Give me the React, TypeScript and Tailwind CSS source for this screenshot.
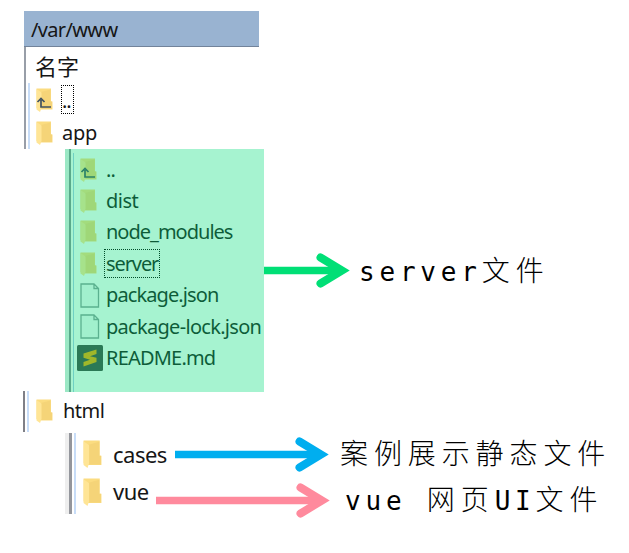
import type { ReactNode } from "react";

type Kind = "up" | "folder" | "file" | "sublime";

type Entry = {
  name: string;
  kind: Kind;
  tracking: string;
  focused?: boolean;
};

const serverFiles: Entry[] = [
  { name: "..", kind: "up", tracking: "tracking-[-0.8px]" },
  { name: "dist", kind: "folder", tracking: "tracking-[-0.5px]" },
  { name: "node_modules", kind: "folder", tracking: "tracking-[-1px]" },
  { name: "server", kind: "folder", tracking: "tracking-[-1.1px]", focused: true },
  { name: "package.json", kind: "file", tracking: "tracking-[-0.9px]" },
  { name: "package-lock.json", kind: "file", tracking: "tracking-[-0.7px]" },
  { name: "README.md", kind: "sublime", tracking: "tracking-[-0.8px]" },
];

function FolderIcon({ up, large }: { up?: boolean; large?: boolean }) {
  return (
    <svg
      viewBox="0 0 17 24"
      preserveAspectRatio="none"
      className={large ? "w-[19px] h-[28px] shrink-0" : "w-[17px] h-[24px] shrink-0"}
    >
      <path d="M0.5 0.5H15V13.5H16.5V21.5H4L0.5 20Z" fill="#fbdc80" />
      <path d="M5 4L14.5 1.5V13.5H16V21L5 21Z" fill="#f5d478" />
      <path d="M0.5 1L5.5 4.5V20L4 24L0.5 21.5Z" fill="#ffe596" />
      {up && (
        <path
          d="M5 12V19H15M1.5 14L5 10.5L8.5 14"
          fill="none"
          stroke="#405160"
          strokeWidth="1.7"
        />
      )}
    </svg>
  );
}

function FileIcon() {
  return (
    <svg viewBox="0 0 20 25" className="w-[20px] h-[25px] shrink-0">
      <path
        d="M1 1H14L18.5 5.5V24H1ZM14 1V5.5H18.5"
        fill="#f8fafa"
        stroke="#8b9a9b"
        strokeWidth="1.3"
      />
    </svg>
  );
}

function SublimeIcon() {
  return (
    <svg viewBox="0 0 26 26" className="w-[26px] h-[26px] shrink-0">
      <rect width="26" height="26" rx="1.5" fill="#424444" />
      <path
        d="M6.5 8.5L19.5 4.5V9L13 11.2L19.5 12.8V17L6.5 21.5V17L13 14.8L6.5 12.7Z"
        fill="#f6a400"
      />
    </svg>
  );
}

function Icon({ kind }: { kind: Kind }) {
  if (kind === "file") return <FileIcon />;
  if (kind === "sublime") return <SublimeIcon />;
  return <FolderIcon up={kind === "up"} />;
}

function Arrow({ width, color }: { width: number; color: string }) {
  return (
    <svg width={width} height="36" viewBox={`0 0 ${width} 36`} className="shrink-0">
      <path d={`M0 18.5H${width - 12}`} stroke={color} strokeWidth="7.5" fill="none" />
      <path
        d={`M${width - 29.5} 5.5L${width - 8} 18.5L${width - 29.5} 31.5`}
        stroke={color}
        strokeWidth="8"
        strokeLinecap="round"
        fill="none"
      />
    </svg>
  );
}

function Note({ children }: { children: ReactNode }) {
  return (
    <span className="font-['DejaVu_Sans_Mono','Noto_Sans_CJK_SC',monospace] text-[26px] leading-[36px] tracking-[4.8px] font-light text-black whitespace-pre">
      {children}
    </span>
  );
}

function Han({ children }: { children: ReactNode }) {
  return (
    <span className="font-['Noto_Sans_CJK_SC',sans-serif] text-[28px] leading-[36px] tracking-[5.9px]">
      {children}
    </span>
  );
}

export default function App() {
  return (
    <div className="w-[629px] h-[553px] overflow-hidden bg-white pt-[11px] font-['Noto_Sans',sans-serif] text-[20px] leading-[30px] text-[#161616]">
      {/* Root directory */}
      <div className="ml-6 w-[235px] h-[138px]">
        <div className="h-9 bg-[#99b3d1] border-b border-[#72839a] pl-[7px] pt-[4px]">
          <span className="tracking-[-0.65px]">/var/www</span>
        </div>
        <div className="h-[102px] border-l-2 border-[#989ea8]">
          <div className="h-9 pl-[9px] pt-[3px] font-['Noto_Sans_CJK_SC',sans-serif] text-[22px]">
            名字
          </div>
          <div className="ml-[2px] h-[66px] border-l-2 border-[#c8ddf8] pl-[6px]">
            <div className="flex items-center h-[33px]">
              <FolderIcon up />
              <span className="ml-[8px] w-[13px] h-[29px] border border-dotted border-black leading-[30px] tracking-[-1px]">
                ..
              </span>
            </div>
            <div className="flex items-center h-[33px]">
              <FolderIcon />
              <span className="ml-[9px] tracking-[-0.3px]">app</span>
            </div>
          </div>
        </div>
      </div>

      {/* app folder, tinted green */}
      <div className="flex h-[242px]">
        <div className="relative ml-[65px] w-[199px] h-[243px] shrink-0 bg-white">
          <div className="flex h-full">
            <div className="w-1 bg-[#eeeeee]" />
            <div className="w-[2px] bg-[#8a8e96]" />
            <div className="ml-[2px] mt-1 w-px bg-[#abc9ec]" />
            <div className="pt-[5px]">
              {serverFiles.map((f) => (
                <div key={f.name} className="flex items-center h-[31.4px]">
                  <div className="w-[30px] flex justify-start pl-[6px] has-[rect]:pl-[3px]">
                    <Icon kind={f.kind} />
                  </div>
                  <span
                    className={
                      f.focused
                        ? `h-[29px] w-[56px] border border-dotted border-black pl-px leading-[27px] ${f.tracking}`
                        : `ml-[2px] whitespace-nowrap ${f.tracking}`
                    }
                  >
                    {f.name}
                  </span>
                </div>
              ))}
            </div>
          </div>
          <div className="absolute inset-0 bg-[#00dd77]/35" />
        </div>
        <div className="flex items-center h-[242px]">
          <Arrow width={86} color="#00df76" />
          <div className="ml-[9px]">
            <Note>
              server<Han>文件</Han>
            </Note>
          </div>
        </div>
      </div>

      {/* html folder */}
      <div className="ml-[23px] flex h-[41px]">
        <div className="w-[2px] bg-[#7f8087]" />
        <div className="ml-[2px] w-[2px] bg-[#c8ddf8]" />
        <div className="ml-[7px] flex items-center pb-[2px]">
          <FolderIcon />
          <span className="ml-[10px] tracking-[-0.5px]">html</span>
        </div>
      </div>

      <div className="ml-[65px] mt-px flex h-[81px]">
        <div className="w-1 bg-[#eeeeee]" />
        <div className="w-[3px] bg-[#94969c]" />
        <div className="ml-[2px] w-[2px] bg-[#c8ddf8]" />
        <div className="ml-[7px] pt-[2px]">
          <div className="flex items-center h-[38px]">
            <FolderIcon large />
            <span className="ml-[11px] w-[62px] pb-px text-[22px] tracking-[-0.5px]">cases</span>
            <Arrow width={154} color="#00aeef" />
            <div className="ml-[11px] pb-[2px]">
              <Note>
                <Han>案例展示静态文件</Han>
              </Note>
            </div>
          </div>
          <div className="flex items-center h-[38px]">
            <FolderIcon large />
            <span className="ml-[11px] w-[43px] pb-[2px] text-[22px] tracking-[-0.5px]">vue</span>
            <div className="flex items-center pt-[16px]">
              <Arrow width={174} color="#ff8a9d" />
              <div className="ml-[15px] pb-px">
                <Note>
                  vue <Han>网页</Han>UI<Han>文件</Han>
                </Note>
              </div>
            </div>
          </div>
        </div>
      </div>
    </div>
  );
}
